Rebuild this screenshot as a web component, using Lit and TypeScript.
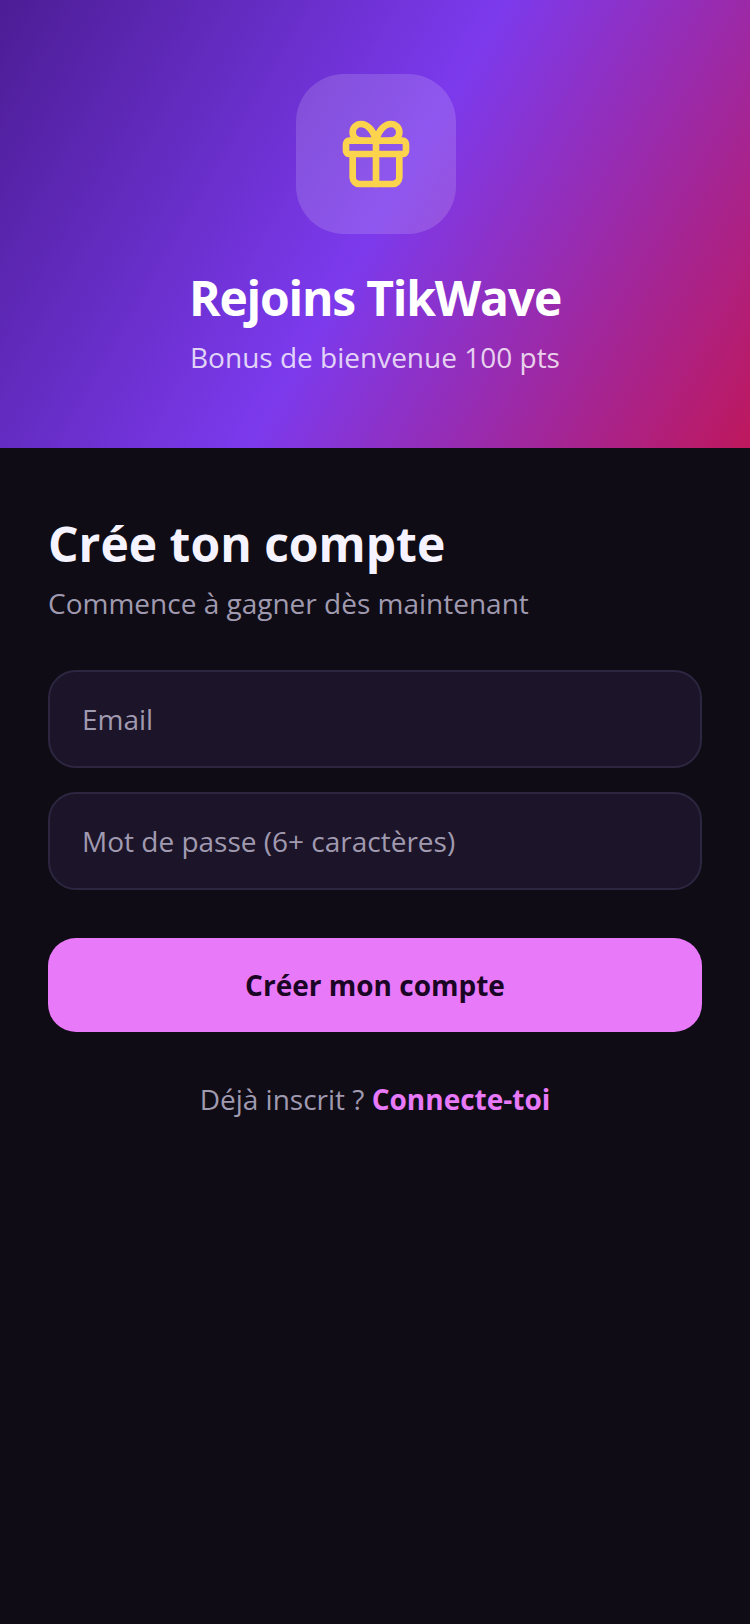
import { LitElement, html, css } from "lit";
import { customElement } from "lit/decorators.js";

@customElement("app-root")
export class AppRoot extends LitElement {
  static styles = css`
    :host { display: block; width: 750px; height: 1624px; background: #0f0c15; font-family: "Open Sans", sans-serif; overflow: hidden; }
    .hero { height: 448px; box-sizing: border-box; padding-top: 74px; display: flex; flex-direction: column; align-items: center;
      background: linear-gradient(120deg, #4c1d95 0%, #7c3aed 50%, #be185d 100%); }
    .badge { width: 160px; height: 160px; margin-left: 2px; border-radius: 48px; background: rgba(255,255,255,0.15); display: flex; align-items: center; justify-content: center; }
    .badge svg { width: 80px; height: 80px; display: block; }
    h1 { margin: 32px 0 0; font-size: 48px; line-height: 64px; font-weight: 700; color: #fff; letter-spacing: -1.2px; }
    .sub { margin-top: 7px; font-size: 28px; line-height: 40px; color: rgba(255,255,255,0.8); }
    .form { padding: 64px 48px 0; display: flex; flex-direction: column; }
    h2 { margin: 0; font-size: 48px; line-height: 64px; font-weight: 700; color: #f5f3ff; }
    .lead { margin-top: 7px; font-size: 28px; line-height: 40px; color: #a09ab0; }
    .fields { margin-top: 47px; display: flex; flex-direction: column; gap: 24px; }
    input { box-sizing: border-box; width: 100%; height: 98px; padding: 0 32px; border: 2px solid #2d2640; border-radius: 28px; background: #1c1428; color: #fff; font: 400 28px "Open Sans", sans-serif; outline: none; }
    input::placeholder { color: #a09ab0; opacity: 1; }
    .submit { margin-top: 48px; height: 94px; border: 0; border-radius: 28px; background: #e879f9; color: #1a0525; font: 700 28px "Open Sans", sans-serif; }
    .switch { margin-top: 47px; text-align: center; font-size: 28px; line-height: 40px; color: #a09ab0; }
    .switch a { color: #e879f9; font-weight: 700; text-decoration: none; }
  `;

  render() {
    return html`
      <header class="hero">
        <div class="badge">
          <svg viewBox="0 0 24 24" fill="none" stroke="#fcd34d" stroke-width="2" stroke-linecap="round" stroke-linejoin="round">
            <rect x="3" y="8" width="18" height="4" rx="1"></rect>
            <path d="M12 8v13"></path>
            <path d="M19 12v7a2 2 0 0 1-2 2H7a2 2 0 0 1-2-2v-7"></path>
            <path d="M7.5 8a2.5 2.5 0 0 1 0-5A4.8 8 0 0 1 12 8a4.8 8 0 0 1 4.5-5 2.5 2.5 0 0 1 0 5"></path>
          </svg>
        </div>
        <h1>Rejoins TikWave</h1>
        <div class="sub">Bonus de bienvenue 100 pts</div>
      </header>
      <main class="form">
        <h2>Crée ton compte</h2>
        <div class="lead">Commence à gagner dès maintenant</div>
        <div class="fields">
          <input type="email" placeholder="Email" />
          <input type="password" placeholder="Mot de passe (6+ caractères)" />
        </div>
        <button class="submit">Créer mon compte</button>
        <div class="switch">Déjà inscrit ? <a href="#">Connecte-toi</a></div>
      </main>
    `;
  }
}
